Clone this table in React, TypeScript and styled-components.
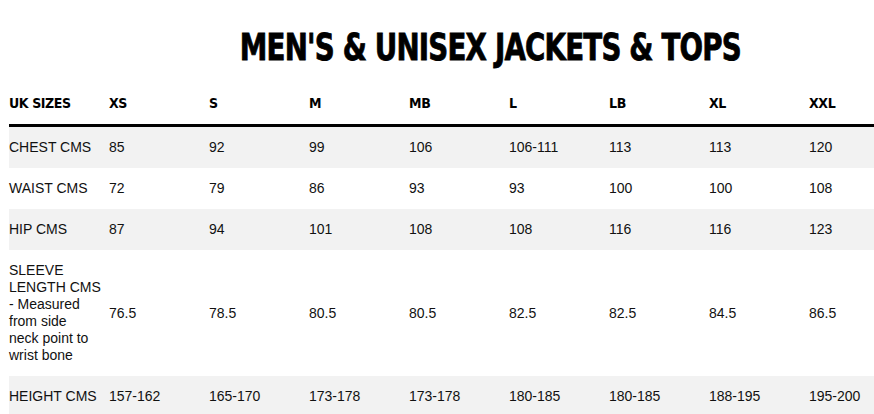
import React from "react";
import styled, { createGlobalStyle } from "styled-components";

const GlobalStyle = createGlobalStyle`
  html, body {
    margin: 0;
    padding: 0;
    background: #ffffff;
    overflow: hidden;
  }
  body {
    font-family: "Liberation Sans", Arial, sans-serif;
    color: #000;
  }
`;

const Page = styled.div`
  width: 874px;
  height: 414px;
  overflow: hidden;
  padding-left: 9px;
  box-sizing: border-box;
`;

const Title = styled.h1`
  margin: 28px 0 0 96px;
  width: 770px;
  text-align: center;
  font-family: "DejaVu Sans Condensed", "Liberation Sans", sans-serif;
  font-weight: 700;
  font-size: 38px;
  line-height: 38px;
  letter-spacing: -1px;
  -webkit-text-stroke: 0.8px #000;
  color: #000;
  white-space: nowrap;
`;

const TitleText = styled.span`
  display: inline-block;
  transform: scaleX(0.81);
  transform-origin: center;
`;

const Table = styled.table`
  margin-top: 17px;
  width: 900px;
  table-layout: fixed;
  border-collapse: collapse;
  border-spacing: 0;
`;

const HeadCell = styled.th`
  box-sizing: border-box;
  width: 100px;
  padding: 12px 5px 12px 0;
  text-align: left;
  vertical-align: middle;
  font-family: "DejaVu Sans Condensed", "Liberation Sans", sans-serif;
  font-weight: 700;
  font-size: 14px;
  line-height: 17px;
  letter-spacing: -0.4px;
  color: #000;
  border-bottom: 3px solid #000;
  white-space: nowrap;
`;

const Row = styled.tr<{ $shaded: boolean }>`
  background: ${(p) => (p.$shaded ? "#f2f2f2" : "#ffffff")};
`;

const Cell = styled.td`
  box-sizing: border-box;
  padding: 12px 5px 12px 0;
  text-align: left;
  vertical-align: middle;
  font-size: 14px;
  line-height: 17px;
  color: #111;
`;

const LabelLine = styled.span`
  display: block;
  white-space: nowrap;
`;

const sizes = ["XS", "S", "M", "MB", "L", "LB", "XL", "XXL"];

const rows: { label: string[]; values: string[] }[] = [
  { label: ["CHEST CMS"], values: ["85", "92", "99", "106", "106-111", "113", "113", "120"] },
  { label: ["WAIST CMS"], values: ["72", "79", "86", "93", "93", "100", "100", "108"] },
  { label: ["HIP CMS"], values: ["87", "94", "101", "108", "108", "116", "116", "123"] },
  {
    label: ["SLEEVE", "LENGTH CMS", "- Measured", "from side", "neck point to", "wrist bone"],
    values: ["76.5", "78.5", "80.5", "80.5", "82.5", "82.5", "84.5", "86.5"],
  },
  {
    label: ["HEIGHT CMS"],
    values: ["157-162", "165-170", "173-178", "173-178", "180-185", "180-185", "188-195", "195-200"],
  },
];

export default function App() {
  return (
    <>
      <GlobalStyle />
      <Page>
        <Title>
          <TitleText>MEN'S &amp; UNISEX JACKETS &amp; TOPS</TitleText>
        </Title>
        <Table>
          <thead>
            <tr>
              <HeadCell>UK SIZES</HeadCell>
              {sizes.map((s) => (
                <HeadCell key={s}>{s}</HeadCell>
              ))}
            </tr>
          </thead>
          <tbody>
            {rows.map((r, i) => (
              <Row key={r.label.join(" ")} $shaded={i % 2 === 0}>
                <Cell>
                  {r.label.map((line) => (
                    <LabelLine key={line}>{line}</LabelLine>
                  ))}
                </Cell>
                {r.values.map((v, j) => (
                  <Cell key={j}>{v}</Cell>
                ))}
              </Row>
            ))}
          </tbody>
        </Table>
      </Page>
    </>
  );
}
